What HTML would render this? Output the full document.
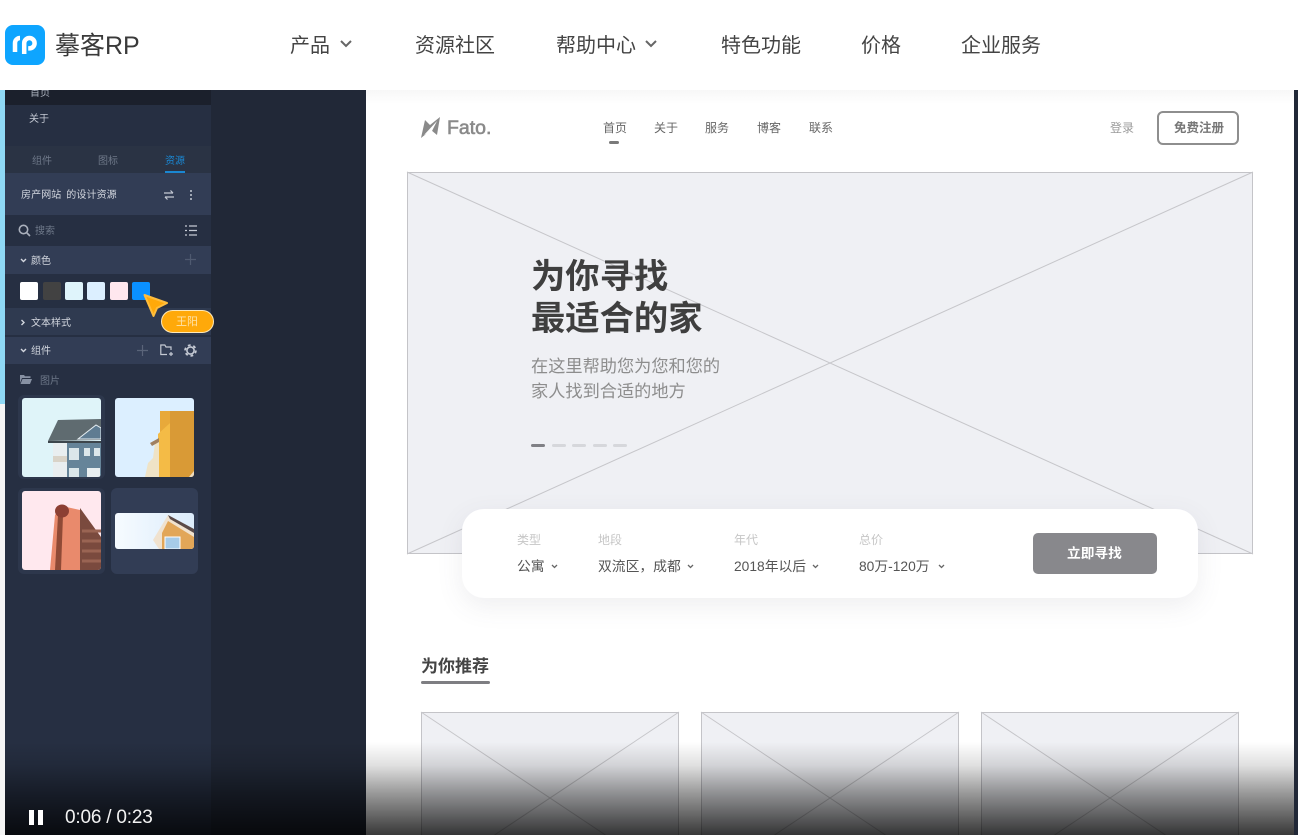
<!DOCTYPE html>
<html lang="zh"><head><meta charset="utf-8"><title>摹客RP</title>
<style>
html,body{margin:0;padding:0;background:#fff;overflow:hidden;width:1298px;height:835px}
#p{position:absolute;left:0;top:0;width:1298px;height:835px;overflow:hidden;font-family:"Liberation Sans","Noto Sans CJK SC",sans-serif;color:#444}
.a,.t{position:absolute}
.t{white-space:nowrap;line-height:1}
svg{position:absolute;overflow:visible}
.nav{font-size:20px;color:#444;top:36px}
.side{font-size:10px;color:#c5cad4}
.dim{color:#6e7889}
.sw{position:absolute;top:282px;width:18px;height:18px;border-radius:2px}
.pic{position:absolute;border-radius:3px;overflow:hidden}
.fn{font-size:12px;color:#666;top:122px}
.lb{font-size:12px;color:#c6c6c6;top:534px}
.val{font-size:13.8px;color:#555;top:560px}
.dot{position:absolute;top:444px;width:14px;height:3px;border-radius:2px;background:#d6d7db}
</style></head><body><div id="p">

<!-- page strip -->
<div class="a" style="left:0;top:90px;width:5px;height:745px;background:#f5f5f5"></div>
<div class="a" style="left:0;top:90px;width:5px;height:314px;background:#8fd8f4"></div>

<!-- video -->
<div class="a" style="left:5px;top:90px;width:1289px;height:745px;background:#fff;overflow:hidden">
 <div class="a" style="left:0;top:0;width:361px;height:745px;background:#212837"></div>
 <div class="a" style="left:0;top:0;width:206px;height:745px;background:#262f42"></div>
 <div class="a" style="left:0;top:0;width:206px;height:15px;background:#1b202c"></div>
 <div class="a" style="left:0;top:56px;width:206px;height:27px;background:#2a3344"></div>
 <div class="a" style="left:0;top:83px;width:206px;height:42px;background:#323d55"></div>
 <div class="a" style="left:0;top:156px;width:206px;height:28px;background:#323d55"></div>
 <div class="a" style="left:0;top:218px;width:206px;height:27px;background:#2f3a50"></div>
 <div class="a" style="left:0;top:247px;width:206px;height:27px;background:#323d55"></div>
 <div class="a" style="left:160px;top:81px;width:20px;height:2px;background:#1a87d2"></div>
 <div class="a" style="left:13px;top:305px;width:87px;height:84px;border-radius:6px;background:#2d374c"></div>
 <div class="a" style="left:13px;top:398px;width:87px;height:86px;border-radius:6px;background:#2d374c"></div>
 <div class="a" style="left:106px;top:398px;width:87px;height:86px;border-radius:6px;background:#323d55"></div>
 <div class="a" style="left:361px;top:0;width:928px;height:745px;background:#fff"></div>
 <div class="a" style="left:361px;top:0;width:928px;height:14px;background:linear-gradient(#f7f7f7,#fff)"></div>
</div>
<div class="a" style="left:1294px;top:90px;width:4px;height:745px;background:#212837"></div>

<!-- editor text -->
<div class="t side" style="left:30px;top:89px;color:#aab0bc">首页</div>
<div class="t side" style="left:29px;top:115px">关于</div>
<div class="t side dim" style="left:32px;top:157px">组件</div>
<div class="t side dim" style="left:98px;top:157px">图标</div>
<div class="t side" style="left:165px;top:157px;color:#1a87d2">资源</div>
<div class="t side" style="left:21px;top:191px;color:#d3d7df;word-spacing:2px;letter-spacing:.1px">房产网站 的设计资源</div>
<svg style="left:163px;top:189px" width="12" height="12" viewBox="0 0 12 12" fill="none" stroke="#c5cad4" stroke-width="1.2"><path d="M1 4h9M7.5 1.5L10 4M11 8H2M4.500 10.500L2 8"/></svg>
<svg style="left:189px;top:189px" width="4" height="12" viewBox="0 0 4 12" fill="#c5cad4"><circle cx="2" cy="2" r="1"/><circle cx="2" cy="6" r="1"/><circle cx="2" cy="10" r="1"/></svg>
<svg style="left:18px;top:224px" width="13" height="13" viewBox="0 0 13 13" fill="none" stroke="#aab0bc" stroke-width="1.600"><circle cx="5.500" cy="5.500" r="4.200"/><path d="M8.500 8.500L12 12"/></svg>
<div class="t side dim" style="left:35px;top:227px">搜索</div>
<svg style="left:185px;top:225px" width="12" height="11" viewBox="0 0 12 11" fill="none" stroke="#c5cad4" stroke-width="1.200"><path d="M0 1h2M4 1h8M0 5.500h2M4 5.500h8M0 10h2M4 10h8"/></svg>
<svg style="left:20px;top:258px" width="7" height="5" viewBox="0 0 7 5" fill="none" stroke="#d3d7df" stroke-width="1.400"><path d="M1 1l2.500 2.500L6 1"/></svg>
<div class="t side" style="left:31px;top:257px;color:#d3d7df">颜色</div>
<svg style="left:185px;top:254px" width="11" height="11" viewBox="0 0 11 11" stroke="#4f5a70" stroke-width="1.200"><path d="M5.500 0v11M0 5.500h11"/></svg>

<div class="sw" style="left:20px;background:#fff"></div>
<div class="sw" style="left:43px;background:#424242"></div>
<div class="sw" style="left:65px;background:#dff4fb"></div>
<div class="sw" style="left:87px;background:#dcefff"></div>
<div class="sw" style="left:110px;background:#ffe7ee"></div>
<div class="sw" style="left:132px;background:#0a90ff"></div>

<svg style="left:20px;top:319px" width="6" height="7" viewBox="0 0 6 7" fill="none" stroke="#d3d7df" stroke-width="1.400"><path d="M1.500 1l2.500 2.500L1.500 6"/></svg>
<div class="t side" style="left:31px;top:319px;color:#d3d7df">文本样式</div>
<svg style="left:20px;top:348px" width="7" height="5" viewBox="0 0 7 5" fill="none" stroke="#d3d7df" stroke-width="1.400"><path d="M1 1l2.500 2.500L6 1"/></svg>
<div class="t side" style="left:31px;top:347px;color:#d3d7df">组件</div>
<svg style="left:137px;top:345px" width="11" height="11" viewBox="0 0 11 11" stroke="#5a6479" stroke-width="1.200"><path d="M5.500 0v11M0 5.500h11"/></svg>
<svg style="left:160px;top:344px" width="14" height="12" viewBox="0 0 14 12" fill="none" stroke="#c5cad4" stroke-width="1.200"><path d="M7 10.500H.8V1h4l1.200 2h5v3M11 8v4M9 10h4"/></svg>
<svg style="left:184px;top:344px" width="13" height="13" viewBox="0 0 13 13" fill="none" stroke="#c5cad4"><circle cx="6.500" cy="6.500" r="3.600" stroke-width="1.600"/><circle cx="6.500" cy="6.500" r="5.400" stroke-width="1.800" stroke-dasharray="2.800 2.850"/></svg>
<svg style="left:20px;top:374px" width="12" height="10" viewBox="0 0 12 10" fill="#8791a3"><path d="M0 1h4l1 1.300h5.500V4H2L0 9zM2.500 5H12l-2 5H.5z"/></svg>
<div class="t side dim" style="left:40px;top:377px">图片</div>

<!-- cursor -->
<svg style="left:143px;top:293px" width="26" height="26" viewBox="0 0 26 26"><path d="M1.500 2L24 10L14 15L10.500 23Z" fill="#ffa90a" stroke="#ffbd3c" stroke-width="2" stroke-linejoin="round"/></svg>
<div class="a" style="left:161px;top:310px;width:53px;height:23px;box-sizing:border-box;border:1px solid #ffe9b8;border-radius:12px;background:#ffa90a"></div>
<div class="t" style="left:176px;top:317px;font-size:11px;color:#ffe2a8">王阳</div>

<!-- thumbs -->
<div class="pic" style="left:22px;top:398px;width:79px;height:79px;background:#dff4f9">
 <svg style="left:0;top:0" width="79" height="79" viewBox="0 0 79 79">
  <path d="M31 44h14v35H31z" fill="#e9eef0"/><path d="M45 44h34v35H45z" fill="#668499"/>
  <path d="M26 43L36 22l43-1v21z" fill="#5f6b70"/><path d="M56 41l18-14 5 3v11z" fill="#5f7c92" stroke="#e6eef2" stroke-width="1"/>
  <path d="M26 43h53v2H26z" fill="#3d464c"/>
  <rect x="47" y="50" width="10" height="12" fill="#dbe6ea"/><rect x="62" y="50" width="6" height="8" fill="#dbe6ea"/><rect x="72" y="50" width="6" height="8" fill="#dbe6ea"/>
  <rect x="31" y="58" width="14" height="6" fill="#d9d3c8"/><rect x="47" y="70" width="10" height="9" fill="#dbe6ea"/><rect x="65" y="70" width="13" height="9" fill="#e8eef0"/>
 </svg></div>
<div class="pic" style="left:115px;top:398px;width:79px;height:79px;background:#dcefff">
 <svg style="left:0;top:0" width="79" height="79" viewBox="0 0 79 79">
  <path d="M45 13h34v66H45z" fill="#d99a36"/><path d="M45 13h10v12l-10 10z" fill="#e8a93a"/><path d="M43 36l12-11v54H43z" fill="#f4bb46"/>
  <path d="M30 79l3-14 5-5 2-15 4-3v37z" fill="#efe3c6"/><path d="M35 45l9-5v4l-7 4z" fill="#a08060"/><path d="M74 79l5-6v6z" fill="#eedcc0"/>
 </svg></div>
<div class="pic" style="left:22px;top:491px;width:79px;height:79px;background:#ffe8ee">
 <svg style="left:0;top:0" width="79" height="79" viewBox="0 0 79 79">
  <path d="M28 79l5-55 7-9 18 4v60z" fill="#e98a6c"/><path d="M58 17l21 29v33H58z" fill="#7a4a3e"/><path d="M36 24l-3 55h6l2-55z" fill="#8f4a36"/>
  <ellipse cx="40" cy="20" rx="7" ry="6.500" fill="#8c3f33"/>
  <path d="M60 40h19M60 50h19M60 60h19M60 70h19" stroke="#9a6453" stroke-width="3"/>
 </svg></div>
<div class="pic" style="left:115px;top:513px;width:79px;height:36px;background:linear-gradient(90deg,#f6fbff,#dcecfb)">
 <svg style="left:0;top:0" width="79" height="36" viewBox="0 0 79 36">
  <path d="M38 27L53 2l26 17v17H44z" fill="#f0e2cf"/><path d="M47 36V20l6-12 26 16v12z" fill="#e2a658"/><path d="M53 2l26 14v4L55 6z" fill="#5a4a48"/><rect x="50" y="24" width="15" height="12" fill="#a7cbe8" stroke="#fff" stroke-width="1"/>
 </svg></div>

<!-- mockup header -->
<svg style="left:421px;top:117px" width="20" height="21" viewBox="0 0 20 21" fill="#8a8a8a"><path d="M0 21L4 3l5 5L19 0l-3 18-6-5z"/><path d="M3 18L16 4l-5 10z" fill="#fff"/></svg>
<div class="t" style="left:447px;top:119px;font-size:19.500px;color:#8a8a8a;-webkit-text-stroke:.6px #8a8a8a">Fato.</div>
<div class="t fn" style="left:603px">首页</div>
<div class="a" style="left:609px;top:141px;width:10px;height:3px;border-radius:2px;background:#7a7a7a"></div>
<div class="t fn" style="left:654px">关于</div>
<div class="t fn" style="left:705px">服务</div>
<div class="t fn" style="left:757px">博客</div>
<div class="t fn" style="left:809px">联系</div>
<div class="t" style="left:1110px;top:122px;font-size:12px;color:#9a9a9a">登录</div>
<div class="a" style="left:1157px;top:111px;width:82px;height:34px;box-sizing:border-box;border:2px solid #8e8e8e;border-radius:6px"></div>
<div class="t" style="left:1174px;top:122px;font-size:12.500px;color:#777;font-weight:700">免费注册</div>

<!-- hero -->
<div class="a" style="left:407px;top:172px;width:846px;height:382px;box-sizing:border-box;border:1px solid #c4c4c8;background:#eff0f4"></div>
<svg style="left:407px;top:172px" width="846" height="382" viewBox="0 0 846 382" stroke="#c6c6ca" stroke-width="1"><path d="M0 0L846 382M846 0L0 382"/></svg>
<div class="t" style="left:531px;top:256px;font-size:34.300px;line-height:42px;font-weight:700;color:#3f3f3f">为你寻找<br>最适合的家</div>
<div class="t" style="left:531px;top:354px;font-size:17.200px;line-height:25px;color:#8d8d8d">在这里帮助您为您和您的<br>家人找到合适的地方</div>
<div class="dot" style="left:531px;background:#808085"></div>
<div class="dot" style="left:552px"></div><div class="dot" style="left:572px"></div><div class="dot" style="left:593px"></div><div class="dot" style="left:613px"></div>

<!-- search -->
<div class="a" style="left:462px;top:509px;width:736px;height:89px;background:#fff;border-radius:22px;box-shadow:0 8px 26px rgba(90,90,110,.1)"></div>
<div class="t lb" style="left:517px">类型</div><div class="t lb" style="left:598px">地段</div><div class="t lb" style="left:734px">年代</div><div class="t lb" style="left:859px">总价</div>
<div class="t val" style="left:517px">公寓</div>
<div class="t val" style="left:598px">双流区，成都</div>
<div class="t val" style="left:734px">2018年以后</div>
<div class="t val" style="left:859px">80万-120万</div>
<svg style="left:551px;top:564px" width="7" height="5" viewBox="0 0 7 5" fill="none" stroke="#666" stroke-width="1.300"><path d="M1 1l2.500 2.500L6 1"/></svg>
<svg style="left:687px;top:564px" width="7" height="5" viewBox="0 0 7 5" fill="none" stroke="#666" stroke-width="1.300"><path d="M1 1l2.500 2.500L6 1"/></svg>
<svg style="left:812px;top:564px" width="7" height="5" viewBox="0 0 7 5" fill="none" stroke="#666" stroke-width="1.300"><path d="M1 1l2.500 2.500L6 1"/></svg>
<svg style="left:938px;top:564px" width="7" height="5" viewBox="0 0 7 5" fill="none" stroke="#666" stroke-width="1.300"><path d="M1 1l2.500 2.500L6 1"/></svg>
<div class="a" style="left:1033px;top:533px;width:124px;height:41px;border-radius:5px;background:#88888c"></div>
<div class="t" style="left:1067px;top:547px;font-size:13.700px;font-weight:700;color:#fff">立即寻找</div>

<!-- recommend -->
<div class="t" style="left:421px;top:658px;font-size:17px;font-weight:700;color:#444">为你推荐</div>
<div class="a" style="left:421px;top:681px;width:69px;height:3px;border-radius:2px;background:#7e7e82"></div>
<div class="a" style="left:421px;top:712px;width:258px;height:123px;box-sizing:border-box;border:1px solid #c4c4c8;border-bottom:0;background:#eff0f4"></div>
<div class="a" style="left:701px;top:712px;width:258px;height:123px;box-sizing:border-box;border:1px solid #c4c4c8;border-bottom:0;background:#eff0f4"></div>
<div class="a" style="left:981px;top:712px;width:258px;height:123px;box-sizing:border-box;border:1px solid #c4c4c8;border-bottom:0;background:#eff0f4"></div>
<svg style="left:421px;top:712px" width="818" height="123" viewBox="0 0 818 123" stroke="#c6c6ca" stroke-width="1"><path d="M0 0L184.500 123M258 0L73.500 123M280 0L464.500 123M538 0L353.500 123M560 0L744.500 123M818 0L633.500 123"/></svg>

<!-- bottom gradient -->
<div class="a" style="left:5px;top:742px;width:1289px;height:93px;background:linear-gradient(rgba(0,0,0,0),rgba(0,0,0,.12) 25%,rgba(0,0,0,.4) 55%,rgba(0,0,0,.78))"></div>
<div class="a" style="left:29px;top:810px;width:5px;height:15px;background:#fff"></div>
<div class="a" style="left:38px;top:810px;width:5px;height:15px;background:#fff"></div>
<div class="t" style="left:65px;top:808px;font-size:19px;color:#f2f2f2;letter-spacing:-.2px">0:06 / 0:23</div>

<!-- site header -->
<div class="a" style="left:0;top:0;width:1298px;height:90px;background:#fff"></div>
<div class="a" style="left:5px;top:25px;width:40px;height:40px;border-radius:8px;background:#0ea5ff"></div>
<svg style="left:5px;top:25px" width="40" height="40" viewBox="0 0 40 40" fill="none" stroke="#fff" stroke-width="4.500"><path d="M10 27V18a5 5 0 0 1 5-5"/><path d="M19.200 29V18.200a5.200 5.200 0 1 1 5.200 5.200h-1.200"/></svg>
<div class="t" style="left:55px;top:34px;font-size:25px;color:#3a3a3a">摹客RP</div>
<div class="t nav" style="left:290px">产品</div>
<svg style="left:340px;top:40px" width="12" height="8" viewBox="0 0 12 8" fill="none" stroke="#666" stroke-width="2"><path d="M1 1l5 5 5-5"/></svg>
<div class="t nav" style="left:415px">资源社区</div>
<div class="t nav" style="left:556px">帮助中心</div>
<svg style="left:645px;top:40px" width="12" height="8" viewBox="0 0 12 8" fill="none" stroke="#666" stroke-width="2"><path d="M1 1l5 5 5-5"/></svg>
<div class="t nav" style="left:721px">特色功能</div>
<div class="t nav" style="left:861px">价格</div>
<div class="t nav" style="left:961px">企业服务</div>
</div></body></html>
